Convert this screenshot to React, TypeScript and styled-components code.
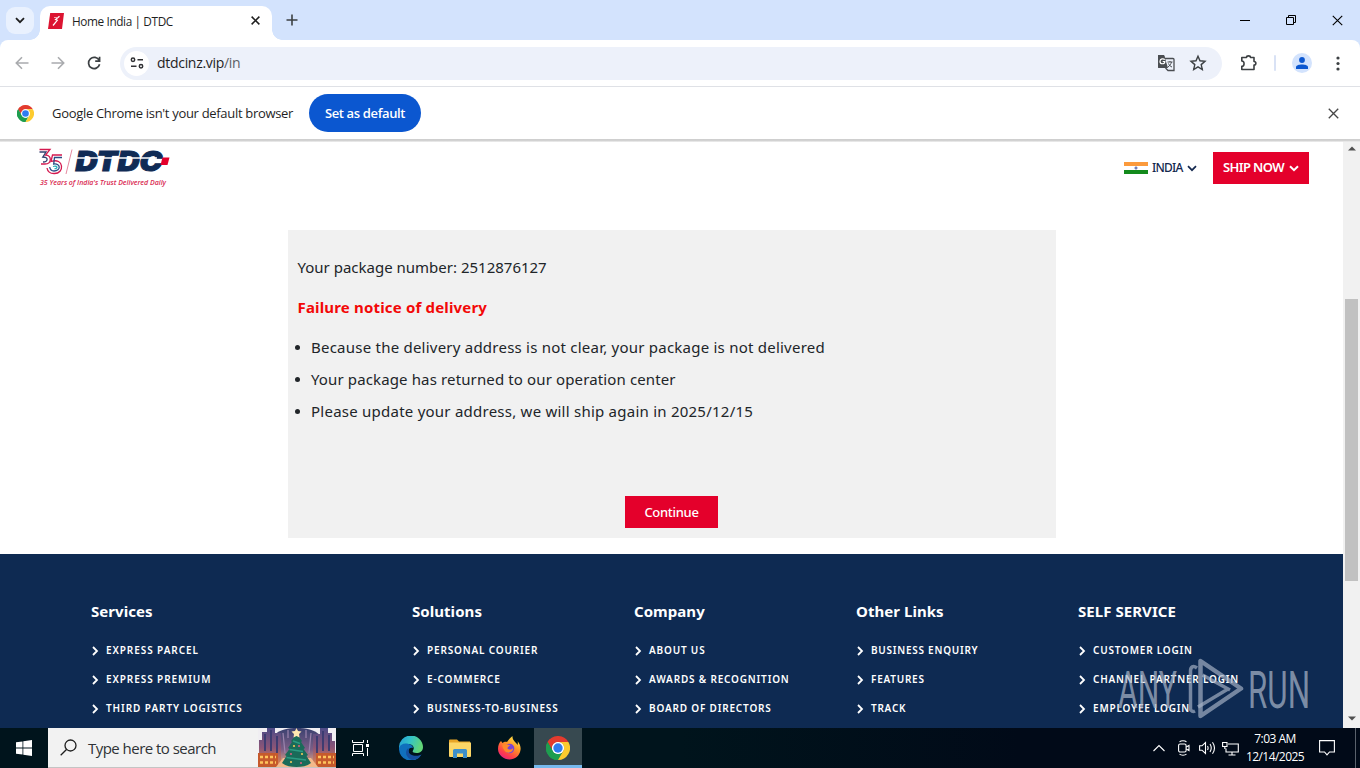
import styled, { createGlobalStyle } from "styled-components";

const UI_FONT = `"Open Sans", "Noto Sans", sans-serif`;
const SITE_FONT = `"Noto Sans", "Open Sans", sans-serif`;

const GlobalStyle = createGlobalStyle`
  * {
    box-sizing: border-box;
  }

  body {
    margin: 0;
    overflow: hidden;
    background: #fff;
    font-family: ${UI_FONT};
  }

  svg {
    display: block;
    flex: none;
  }
`;

const Screen = styled.div`
  width: 1360px;
  height: 768px;
  display: flex;
  flex-direction: column;
  overflow: hidden;
`;

interface TextProps {
  $size: number;
  $spacing?: number;
  $weight?: number;
}

const Text = styled.span<TextProps>`
  font-size: ${(p) => p.$size}px;
  letter-spacing: ${(p) => p.$spacing ?? 0}px;
  font-weight: ${(p) => p.$weight ?? 400};
  white-space: nowrap;
`;

/* Browser tabs */

const TabStrip = styled.div`
  height: 40px;
  flex: none;
  display: flex;
  background: #d3e3fd;
`;

const TabSearch = styled.div`
  width: 28px;
  height: 27px;
  margin: 7px 6px 0;
  border-radius: 9px;
  background: #e9f1fe;
  display: grid;
  place-items: center;
`;

const Tab = styled.div`
  position: relative;
  width: 232px;
  height: 34px;
  margin-top: 6px;
  padding: 0 12px 5px 8px;
  border-radius: 10px 10px 0 0;
  background: #fff;
  color: #1f1f1f;
  display: flex;
  align-items: center;
  gap: 8px;

  &::before,
  &::after {
    content: "";
    position: absolute;
    bottom: 0;
    width: 10px;
    height: 10px;
  }

  &::before {
    left: -10px;
    background: radial-gradient(circle at 0 0, transparent 9.5px, #fff 10px);
  }

  &::after {
    right: -10px;
    background: radial-gradient(circle at 100% 0, transparent 9.5px, #fff 10px);
  }

  & > svg:last-child {
    margin-left: auto;
  }
`;

const NewTab = styled.div`
  width: 40px;
  padding-top: 14px;
  display: flex;
  justify-content: center;
`;

const WindowButtons = styled.div`
  margin-left: auto;
  display: flex;

  & > div {
    width: 46px;
    height: 40px;
    display: grid;
    place-items: center;
  }
`;

/* Toolbar */

const ToolbarBack = styled.div`
  flex: none;
  background: #d3e3fd;
`;

const Toolbar = styled.div`
  height: 47px;
  padding: 0 13px 0 13px;
  border-radius: 8px 8px 0 0;
  border-bottom: 1px solid #dfe1e6;
  background: #fff;
  display: flex;
  align-items: center;
`;

const NavButtons = styled.div`
  width: 107px;
  display: flex;
  gap: 18px;
`;

const Omnibox = styled.div`
  width: 1102px;
  height: 33px;
  padding: 0 15px 0 4px;
  border-radius: 17px;
  background: #edf1fa;
  color: #1f1f1f;
  display: flex;
  align-items: center;

  & > span {
    padding-bottom: 1px;
  }

  & em {
    font-style: normal;
    color: #5c5f66;
  }
`;

const SiteInfo = styled.div`
  width: 25px;
  height: 25px;
  margin-right: 8px;
  border-radius: 50%;
  background: #fff;
  display: grid;
  place-items: center;
`;

const OmniboxActions = styled.div`
  margin-left: auto;
  display: flex;
  align-items: center;
  gap: 14px;
`;

const ToolbarActions = styled.div`
  margin-left: 18px;
  display: flex;
  align-items: center;
`;

const Divider = styled.div`
  width: 2px;
  height: 16px;
  margin: 0 16px 0 16px;
  border-radius: 1px;
  background: #d9e2f5;
`;

const Avatar = styled.div`
  width: 20px;
  height: 20px;
  margin-right: 24px;
  border-radius: 50%;
  background: #d3e3fd;
  display: grid;
  place-items: center;
`;

/* Default browser prompt */

const InfoBar = styled.div`
  height: 52px;
  flex: none;
  padding: 0 21px 0 17px;
  background: #fff;
  color: #1f1f1f;
  display: flex;
  align-items: center;

  & > svg:last-child {
    margin-left: auto;
  }
`;

const InfoText = styled.div`
  width: 257px;
  margin-left: 18px;
  padding-bottom: 2px;
`;

const DefaultButton = styled.div`
  width: 112px;
  height: 38px;
  border-radius: 19px;
  background: #0b57d0;
  color: #fff;
  display: grid;
  place-items: center;
`;

const InfoShadow = styled.div`
  height: 3px;
  flex: none;
  background: linear-gradient(#cdcdcd, #d2d2d2 50%, #f1f1f1);
`;

/* Web page */

const Viewport = styled.div`
  height: 586px;
  flex: none;
  display: flex;
`;

const Page = styled.div`
  position: relative;
  width: 1343px;
  display: flex;
  flex-direction: column;
  background: #fff;
  font-family: ${SITE_FONT};
`;

const Header = styled.div`
  height: 88px;
  padding: 2px 34px 0 36px;
  display: flex;
  justify-content: space-between;
`;

const HeaderActions = styled.div`
  height: 32px;
  margin-top: 8px;
  display: flex;
  align-items: center;
  color: #14284f;

  & span {
    padding-bottom: 2px;
  }
`;

const Country = styled.div`
  width: 89px;
  display: flex;
  align-items: center;
  gap: 4px;
`;

const ShipButton = styled.div`
  width: 96px;
  height: 32px;
  background: #e4002b;
  color: #fff;
  display: flex;
  align-items: center;
  justify-content: center;
  gap: 5px;
`;

const Notice = styled.div`
  width: 768px;
  height: 308px;
  margin: 0 0 16px 288px;
  padding: 21px 9px 10px;
  background: #f1f1f1;
  color: #212529;
  display: flex;
  flex-direction: column;
`;

const NoticeLine = styled.div<{ $alert?: boolean }>`
  height: 32px;
  margin-bottom: 8px;
  padding-left: 0.5px;
  line-height: 32px;
  color: ${(p) => (p.$alert ? "#f30808" : "inherit")};
`;

const NoticeList = styled.ul`
  margin: 0;
  padding: 0 0 0 14px;
  list-style: none;

  & > li {
    position: relative;
    height: 32px;
    line-height: 32px;
  }

  & > li::before {
    content: "";
    position: absolute;
    left: -16px;
    top: 14px;
    width: 5px;
    height: 5px;
    border-radius: 50%;
    background: #212529;
  }
`;

const ContinueButton = styled.div`
  width: 93px;
  height: 32px;
  margin: auto 0 0 328px;
  background: #e4002b;
  color: #fff;
  display: grid;
  place-items: center;
`;

const Footer = styled.div`
  flex: 1;
  padding: 41px 0 0 91px;
  background: #0e2a52;
  color: #fff;
  display: grid;
  grid-template-columns: 321px 222px 222px 222px 1fr;
`;

const FooterTitle = styled.div`
  height: 32px;
  margin-bottom: 8px;
  line-height: 32px;
`;

const FooterLink = styled.div`
  height: 29px;
  display: flex;
  align-items: center;
  gap: 7px;

  & > svg {
    margin-top: 2px;
  }
`;

const Watermark = styled.svg`
  position: absolute;
  right: 27px;
  bottom: 8px;
`;

const Scrollbar = styled.div`
  width: 17px;
  background: #f1f1f1;
  display: flex;
  flex-direction: column;
  align-items: center;
  justify-content: space-between;
  padding: 4px 0 7px;
`;

const ScrollTrack = styled.div`
  width: 13px;
  flex: 1;
  padding-top: 148px;
`;

const ScrollThumb = styled.div`
  height: 282px;
  background: #c1c1c1;
`;

/* Windows taskbar */

const Taskbar = styled.div`
  height: 40px;
  flex: none;
  background: linear-gradient(90deg, #00141c, #00141c 50%, #010a18 75%, #010a18);
  color: #fff;
  display: flex;
`;

const StartButton = styled.div`
  width: 48px;
  display: grid;
  place-items: center;
`;

const SearchBox = styled.div`
  width: 288px;
  background: #f2f2f2;
  border-bottom: 1px solid #c4c4c4;
  color: #2f3336;
  display: flex;
  align-items: center;

  & > svg:first-child {
    margin: 0 11px 0 12px;
  }

  & > svg:last-child {
    margin-left: auto;
  }
`;

const TaskButton = styled.div<{ $width?: number; $active?: boolean }>`
  width: ${(p) => p.$width ?? 49}px;
  border-bottom: 3px solid ${(p) => (p.$active ? "#76b9ed" : "transparent")};
  border-top: 3px solid ${(p) => (p.$active ? "#374950" : "transparent")};
  background: ${(p) => (p.$active ? "#374950" : "transparent")};
  display: grid;
  place-items: center;
`;

const Tray = styled.div`
  margin-left: auto;
  display: flex;
  align-items: center;
`;

const TrayIcon = styled.svg<{ $gap?: number }>`
  margin-left: ${(p) => p.$gap ?? 0}px;
  fill: none;
  stroke: #fff;
  stroke-width: 1.1;
`;

const Clock = styled.div`
  width: 72px;
  padding: 2px 0;
  display: flex;
  flex-direction: column;
  align-items: center;
  line-height: 18px;
`;

const ShowDesktop = styled.div`
  width: 5px;
  height: 40px;
  margin-left: 20px;
  border-left: 1px solid #5a626c;
`;

const ChevronDown = ({ width, color, stroke }: { width: number; color: string; stroke: number }) => (
  <svg width={width} height={7} viewBox="0 0 10 7" fill="none" stroke={color} strokeWidth={stroke}>
    <path d="M1 1.2 5 5.2 9 1.2" />
  </svg>
);

const ChromeLogo = ({ size }: { size: number }) => (
  <svg width={size} height={size} viewBox="0 0 48 48">
    <circle cx="24" cy="24" r="12" fill="#fff" />
    <path d="M3.2 12A24 24 0 0 1 44.8 12H24A12 12 0 0 0 13.6 18z" fill="#e33b2e" />
    <path d="M3.2 12 13.6 30A12 12 0 0 0 34.4 30L24 48A24 24 0 0 1 3.2 12z" fill="#1e9d4f" />
    <path d="M3.2 12A24 24 0 0 1 8 6L18 14A12 12 0 0 0 12.300 27.800z" fill="#e33b2e" />
    <path d="M3.200 12 12.600 28A12 12 0 0 0 24 36L26 44 24 48A24 24 0 0 1 3.200 12z" fill="#1e9d4f" />
    <path d="M44.8 12A24 24 0 0 1 24 48L34.4 30A12 12 0 0 0 24 12z" fill="#fdcb2e" />
    <circle cx="24" cy="24" r="12" fill="#fff" />
    <circle cx="24" cy="24" r="9.4" fill="#2f7cf0" />
  </svg>
);

const Favicon = () => (
  <svg width="16" height="16" viewBox="0 0 16 16">
    <path d="M2.2 0H16L14 16H0z" fill="#dc1431" />
    <path d="M11.500 3.200 7.500 6.500 9.300 7.300 5 12.500" fill="none" stroke="#fff" strokeWidth="1.200" />
    <path d="M6 4.500H9.500" stroke="#f5a0ac" strokeWidth="1" />
  </svg>
);

const Cross = ({ size, stroke, color }: { size: number; stroke: number; color: string }) => (
  <svg width={size} height={size} viewBox="0 0 10 10" stroke={color} strokeWidth={stroke}>
    <path d="M.7.7 9.3 9.3M9.3.7.7 9.3" />
  </svg>
);

const Logo = () => (
  <svg width="136" height="46" viewBox="36 144 136 46">
    <g fill="none" strokeWidth="1.300">
      <path d="M39.500 149.500H50L45.500 155C52 155 52 164 45 164H41" stroke="#d4194f" />
      <path d="M39.500 152H46L42.800 157C49 157 48 162 43 162" stroke="#31406f" />
      <path d="M62 155H52.500L51 161.500C64 157 65 174 54 173.500C49.500 173.500 47.500 171 47 168" stroke="#d4194f" />
      <path d="M62 157.500H54.500L53.700 164C61 163 61 171 54 171C51.500 171 50 169 49.700 167" stroke="#2a4b85" />
      <path d="M53 166.500C58 165 58 169 54.500 168.700" stroke="#2eb0bd" />
    </g>
    <path d="M72 149.500 66 174" stroke="#e58aa0" strokeWidth="1" />
    <text
      x="75.500"
      y="171"
      textLength="87"
      lengthAdjust="spacingAndGlyphs"
      fontFamily="Inter, sans-serif"
      fontSize="26.500"
      fontWeight="900"
      fontStyle="italic"
      fill="#102b55"
      stroke="#102b55"
      strokeWidth="1"
    >
      DTDC
    </text>
    <path d="M75 158H157" stroke="#fff" strokeWidth="1.500" />
    <path d="M162.500 157.500H169.500L167.500 165H160.500z" fill="#e4002b" />
    <text
      x="40"
      y="184.500"
      textLength="126"
      lengthAdjust="spacingAndGlyphs"
      fontFamily="Open Sans, sans-serif"
      fontSize="6.600"
      fontWeight="600"
      fontStyle="italic"
      fill="#d92850"
    >
      35 Years of India's Trust Delivered Daily
    </text>
  </svg>
);

const IndiaFlag = () => (
  <svg width="24" height="12" viewBox="0 0 24 12">
    <rect width="24" height="12" fill="#fff" />
    <rect width="24" height="4" fill="#fb9a3c" />
    <rect y="8" width="24" height="4" fill="#138a1c" />
    <circle cx="12" cy="6" r="1.200" fill="#8d98c8" stroke="#4a5aa5" strokeWidth=".6" />
  </svg>
);

const AnyRun = () => (
  <Watermark width="200" height="62" viewBox="0 0 200 62">
    <g fill="#a7b3c6" fillOpacity=".72" fontFamily="Roboto, sans-serif" fontWeight="400" fontSize="52">
      <text x="2" y="50" textLength="59" lengthAdjust="spacingAndGlyphs">
        ANY
      </text>
      <text x="132" y="50" textLength="62" lengthAdjust="spacingAndGlyphs">
        RUN
      </text>
    </g>
    <g fill="none" stroke="#a7b3c6" strokeOpacity=".68" strokeWidth="4.500" strokeLinejoin="round">
      <path d="M84.500 3V58L125 30.500z" />
      <path d="M86.500 17 114 32M82 49 112 31" strokeWidth="3.500" />
      <path d="M81 10C77 7 74.500 9 74.500 13V51C74.500 53 77 54 79 53" strokeWidth="3.500" />
    </g>
  </Watermark>
);

const HolidayArt = () => (
  <svg width="78" height="39" viewBox="0 0 78 39">
    <defs>
      <linearGradient id="dusk" x1="0" y1="0" x2="0" y2="1">
        <stop offset="0" stopColor="#4d4b87" />
        <stop offset=".5" stopColor="#8b5577" />
        <stop offset="1" stopColor="#e58a4e" />
      </linearGradient>
      <linearGradient id="street" x1="0" y1="0" x2="0" y2="1">
        <stop offset="0" stopColor="#39406f" />
        <stop offset=".55" stopColor="#7c5f87" />
        <stop offset="1" stopColor="#f0b07c" />
      </linearGradient>
    </defs>
    <rect width="78" height="39" fill="#f0eef2" />
    <path d="M15 8C22 1 30 0 39 0S56 1 63 8V39H15z" fill="url(#street)" />
    <path d="M1 25V12H4V4H9V0H17V5H23V39H1z" fill="url(#dusk)" />
    <path d="M77 25V13H74V5H70V0H62V6H55V39H77z" fill="url(#dusk)" />
    <path d="M7 6V23M13 2V23M19 8V28M59 8V28M65 3V23M71 7V23" stroke="#383a70" strokeWidth="1.800" />
    <path d="M25 5 27 25M53 5 51 25M30 2V10M48 2V10" stroke="#9b84ad" strokeWidth="1.200" />
    <rect y="25" width="20" height="14" fill="#c65a2c" />
    <rect x="58" y="25" width="20" height="14" fill="#c65a2c" />
    <path d="M2 29H18M2 34.500H18M60 29H76M60 34.500H76" stroke="#ffc45c" strokeWidth="2.500" strokeDasharray="3 2" />
    <path d="M18 39 25 30H53L60 39z" fill="#f3b98a" />
    <path
      d="M38.500 6 44 13 43 14 47 20 45.500 21 50 27 48.500 28 53 35C49 38 44 39 38.500 39S28 38 24 35L28.500 28 27 27 31.500 21 30 20 34 14 33 13z"
      fill="#1a6b59"
    />
    <path d="M35 13 42 15.500M31.500 21.500 45 23.500M28.500 29.500 48 32" stroke="#2d9b83" strokeWidth="1.600" />
    <path d="M38.500 0 40 3 43.500 3.500 41 6 41.500 9.500 38.500 8 35.500 9.500 36 6 33.500 3.500 37 3z" fill="#ffe7b0" />
    <g fill="#f1c958">
      <circle cx="36" cy="18" r="1.100" />
      <circle cx="44" cy="26" r="1.100" />
      <circle cx="33" cy="34" r="1.100" />
    </g>
    <g fill="#d65d7b">
      <circle cx="41" cy="18" r="1.100" />
      <circle cx="33" cy="26" r="1.100" />
      <circle cx="43" cy="35" r="1.100" />
    </g>
  </svg>
);

const Edge = () => (
  <svg width="24" height="24" viewBox="0 0 24 24">
    <defs>
      <linearGradient id="edge-top" x1="0" y1="0" x2="1" y2=".3">
        <stop offset="0" stopColor="#229bd8" />
        <stop offset=".5" stopColor="#33c3c8" />
        <stop offset="1" stopColor="#62d678" />
      </linearGradient>
    </defs>
    <path d="M0 12A12 12 0 0 1 24 11C24 15 21 17 17.500 17C14 17 13 15.500 14 14.500C16 12 14 8 9 8C4 8 1 10 0 14z" fill="url(#edge-top)" />
    <path d="M0 12C1 8.500 4.500 7 8 7.500C12 8 14 10 14 12C12 11 9.500 12 9.500 15C9.500 19 14 21.500 18 21C20 20.700 22 19 22.500 18.500A12 12 0 0 1 0 12z" fill="#1070bd" />
    <path d="M9.500 12C5 15 7 22 13 24A12 12 0 0 0 22.500 18.500C17 21.500 9.500 19 9.500 15z" fill="#164f9e" />
  </svg>
);

const Explorer = () => (
  <svg width="22" height="19" viewBox="0 0 22 19">
    <path d="M0 1.500Q0 .5 1 .5H8L10 2.500H21V7H0z" fill="#e8a527" />
    <path d="M0 3.500H22V17Q22 18 21 18H1Q0 18 0 17z" fill="#fcd667" />
    <path d="M4 19V11.500Q4 10 5.500 10H16.500Q18 10 18 11.500V19H14V14.500H8V19z" fill="#3e8fcb" />
  </svg>
);

const Firefox = () => (
  <svg width="23" height="24" viewBox="0 0 23 24">
    <defs>
      <linearGradient id="fox" x1=".8" y1="0" x2=".2" y2="1">
        <stop offset="0" stopColor="#fff04c" />
        <stop offset=".4" stopColor="#ff9526" />
        <stop offset=".75" stopColor="#ff3e49" />
        <stop offset="1" stopColor="#e31d88" />
      </linearGradient>
    </defs>
    <path d="M3 5 4.500 7C6 5.500 8 5.500 9 6C10 4 12 2 14.500 0C14 4 18 6 19.500 9C20 7.500 20 6 19.500 5C22 8 23 11 22.500 14C21.500 20 17 23.500 11.500 23.500S0 19 0 13C0 9 1.500 6.500 3 5z" fill="url(#fox)" />
    <circle cx="11.500" cy="12.500" r="4.800" fill="#7a43d6" />
    <path d="M4.500 8.500C8 7.500 10 9 12.500 9C11 10.500 9.500 10.500 9.500 12.500C11 14.500 14 13.500 15 12C15.500 16.500 9 18.500 6.500 14.500C5 12.500 4 10.500 4.500 8.500z" fill="#ff8a2b" />
  </svg>
);

const Puzzle = () => (
  <svg width="18" height="18" viewBox="0 0 18 18" fill="none" stroke="#3c4043" strokeWidth="1.600" strokeLinejoin="round">
    <path d="M1.800 3.500H6.500C6.500 1.300 10.500 1.300 10.500 3.500H14V7.500C16.500 7.500 16.500 11 14 11V15.500H1.800V12.300C4.800 12.300 4.800 7 1.800 7z" />
  </svg>
);

const Translate = () => (
  <svg width="18" height="18" viewBox="0 0 18 18">
    <path d="M1.500 1H7L11.500 14H2Q1 14 1 13V2Q1 1 1.500 1z" fill="#4a4d51" />
    <path d="M8 4.500H16Q17 4.500 17 5.500V16.500H11L8.500 14" fill="#edf1fa" stroke="#4a4d51" strokeWidth="1.300" />
    <path d="M1.500 1H7L11 14H2Q1 14 1 13V2Q1 1 1.500 1z" fill="#4a4d51" />
    <path d="M7.800 5.700C6.500 4.200 3 4.500 3 7.500S7.800 10.500 7.800 7.500H5.700" fill="none" stroke="#fff" strokeWidth="1.200" />
    <path d="M10.500 8H15.500M13 7V8M14.500 8C14 10 12.500 12 11 13M11.500 9.500C12 11 13.500 12.500 15 13" fill="none" stroke="#4a4d51" strokeWidth="1" />
  </svg>
);

const footerColumns = [
  { title: "Services", spacing: 0.92, links: ["EXPRESS PARCEL", "EXPRESS PREMIUM", "THIRD PARTY LOGISTICS"] },
  { title: "Solutions", spacing: 0.83, links: ["PERSONAL COURIER", "E-COMMERCE", "BUSINESS-TO-BUSINESS"] },
  { title: "Company", spacing: 0.82, links: ["ABOUT US", "AWARDS & RECOGNITION", "BOARD OF DIRECTORS"] },
  { title: "Other Links", spacing: 0.75, links: ["BUSINESS ENQUIRY", "FEATURES", "TRACK"] },
  { title: "SELF SERVICE", spacing: 0.8, links: ["CUSTOMER LOGIN", "CHANNEL PARTNER LOGIN", "EMPLOYEE LOGIN"] },
];

const BrowserChrome = () => (
  <>
    <TabStrip>
      <TabSearch>
        <ChevronDown width={10} color="#1f1f1f" stroke={1.8} />
      </TabSearch>
      <Tab>
        <Favicon />
        <Text $size={11.8} $spacing={-0.38}>
          Home India | DTDC
        </Text>
        <Cross size={9} stroke={1.7} color="#1f1f1f" />
      </Tab>
      <NewTab>
        <svg width="12" height="12" viewBox="0 0 12 12" stroke="#3c4043" strokeWidth="1.600">
          <path d="M6 .5V11.500M.5 6H11.500" />
        </svg>
      </NewTab>
      <WindowButtons>
        <div>
          <svg width="10" height="2" viewBox="0 0 10 2">
            <rect y="1" width="10" height="1" fill="#000" />
          </svg>
        </div>
        <div>
          <svg width="10" height="10" viewBox="0 0 10 10" fill="none" stroke="#000">
            <path d="M.5 2.500H7.500V9.500H.5zM2.500 2.500V.5H9.500V7.500H7.500" />
          </svg>
        </div>
        <div>
          <Cross size={11} stroke={1} color="#000" />
        </div>
      </WindowButtons>
    </TabStrip>
    <ToolbarBack>
      <Toolbar>
        <NavButtons>
          <svg width="18" height="18" viewBox="0 0 18 18" fill="none" stroke="#a9abae" strokeWidth="1.600">
            <path d="M15.500 9H3.500M9 3.300 3.300 9 9 14.700" />
          </svg>
          <svg width="18" height="18" viewBox="0 0 18 18" fill="none" stroke="#a9abae" strokeWidth="1.600">
            <path d="M2.500 9H14.500M9 3.300 14.700 9 9 14.700" />
          </svg>
          <svg width="18" height="18" viewBox="0 0 18 18" fill="none" stroke="#3c4043" strokeWidth="1.700">
            <path d="M14.200 6.500A5.600 5.600 0 1 0 14.600 10.300M14.600 2.800V7.200H10.200" />
          </svg>
        </NavButtons>
        <Omnibox>
          <SiteInfo>
            <svg width="14" height="12" viewBox="0 0 14 12" fill="none" stroke="#303134" strokeWidth="1.500">
              <circle cx="3" cy="2.800" r="1.700" />
              <path d="M7.500 2.800H13M1 9.200H6.500" />
              <circle cx="11" cy="9.200" r="1.700" />
            </svg>
          </SiteInfo>
          <Text $size={14} $spacing={-0.3}>
            dtdcinz.vip<em>/in</em>
          </Text>
          <OmniboxActions>
            <Translate />
            <svg width="18" height="18" viewBox="0 0 18 18" fill="none" stroke="#3c4043" strokeWidth="1.400">
              <path d="M9 2.200 11 6.800 16 7.300 12.200 10.600 13.300 15.500 9 12.900 4.700 15.500 5.800 10.600 2 7.300 7 6.800z" />
            </svg>
          </OmniboxActions>
        </Omnibox>
        <ToolbarActions>
          <Puzzle />
          <Divider />
          <Avatar>
            <svg width="12" height="12" viewBox="0 0 12 12" fill="#0b57d0">
              <circle cx="6" cy="3" r="2.900" />
              <path d="M0 12V10C0 6.500 12 6.500 12 10V12z" />
            </svg>
          </Avatar>
          <svg width="4" height="15" viewBox="0 0 4 15" fill="#3c4043">
            <circle cx="2" cy="2" r="1.600" />
            <circle cx="2" cy="7.500" r="1.600" />
            <circle cx="2" cy="13" r="1.600" />
          </svg>
        </ToolbarActions>
      </Toolbar>
    </ToolbarBack>
    <InfoBar>
      <ChromeLogo size={17} />
      <InfoText>
        <Text $size={13} $spacing={-0.31}>
          Google Chrome isn't your default browser
        </Text>
      </InfoText>
      <DefaultButton>
        <Text $size={13} $weight={600} $spacing={-0.36}>
          Set as default
        </Text>
      </DefaultButton>
      <Cross size={11} stroke={1.2} color="#474747" />
    </InfoBar>
    <InfoShadow />
  </>
);

const WebPage = () => (
  <Viewport>
    <Page>
      <Header>
        <Logo />
        <HeaderActions>
          <Country>
            <IndiaFlag />
            <Text $size={12} $weight={500} $spacing={-0.75}>
              INDIA
            </Text>
            <ChevronDown width={10} color="#14284f" stroke={1.7} />
          </Country>
          <ShipButton>
            <Text $size={13} $weight={600} $spacing={-0.6}>
              SHIP NOW
            </Text>
            <ChevronDown width={10} color="#fff" stroke={2} />
          </ShipButton>
        </HeaderActions>
      </Header>
      <Notice>
        <NoticeLine>
          <Text $size={15}>Your package number: 2512876127</Text>
        </NoticeLine>
        <NoticeLine $alert>
          <Text $size={15} $weight={700} $spacing={0.17}>
            Failure notice of delivery
          </Text>
        </NoticeLine>
        <NoticeList>
          <li>
            <Text $size={15} $spacing={0.23}>
              Because the delivery address is not clear, your package is not delivered
            </Text>
          </li>
          <li>
            <Text $size={15} $spacing={0.13}>
              Your package has returned to our operation center
            </Text>
          </li>
          <li>
            <Text $size={15} $spacing={0.24}>
              Please update your address, we will ship again in 2025/12/15
            </Text>
          </li>
        </NoticeList>
        <ContinueButton>
          <Text $size={13} $weight={500} $spacing={-0.3}>
            Continue
          </Text>
        </ContinueButton>
      </Notice>
      <Footer>
        {footerColumns.map((column) => (
          <div key={column.title}>
            <FooterTitle>
              <Text $size={15} $weight={700} $spacing={0.05}>
                {column.title}
              </Text>
            </FooterTitle>
            {column.links.map((link) => (
              <FooterLink key={link}>
                <svg width="8" height="10" viewBox="0 0 8 10" fill="none" stroke="#fff" strokeWidth="1.800">
                  <path d="M2 1 6 5 2 9" />
                </svg>
                <Text $size={10} $weight={600} $spacing={column.spacing}>
                  {link}
                </Text>
              </FooterLink>
            ))}
          </div>
        ))}
      </Footer>
      <AnyRun />
    </Page>
    <Scrollbar>
      <svg width="8" height="5" viewBox="0 0 8 5" fill="#505050">
        <path d="M0 4.500 4 .5 8 4.500z" />
      </svg>
      <ScrollTrack>
        <ScrollThumb />
      </ScrollTrack>
      <svg width="8" height="5" viewBox="0 0 8 5" fill="#505050">
        <path d="M0 .5 4 4.500 8 .5z" />
      </svg>
    </Scrollbar>
  </Viewport>
);

const WindowsTaskbar = () => (
  <Taskbar>
    <StartButton>
      <svg width="16" height="16" viewBox="0 0 16 16" fill="#fff">
        <path d="M0 2.300 6.500 1.400V7.600H0zM7.300 1.300 16 0V7.600H7.300zM0 8.400H6.500V14.600L0 13.700zM7.300 8.400H16V16L7.300 14.700z" />
      </svg>
    </StartButton>
    <SearchBox>
      <svg width="17" height="17" viewBox="0 0 17 17" fill="none" stroke="#1f1f1f" strokeWidth="1.300">
        <circle cx="10.500" cy="6.500" r="5.500" />
        <path d="M6.500 10.500.7 16.300" />
      </svg>
      <Text $size={15} $spacing={-0.53}>
        Type here to search
      </Text>
      <HolidayArt />
    </SearchBox>
    <TaskButton $width={50}>
      <svg width="18" height="16" viewBox="0 0 18 16" fill="none" stroke="#fff">
        <path d="M.5 0V2.500H11.500V0M.5 16V13.500H11.500V16M1.500 4.500H10.500V11.500H1.500zM15.500 0V3M15.500 8V16" />
        <rect x="14.500" y="4.500" width="2" height="2" fill="#fff" />
      </svg>
    </TaskButton>
    <TaskButton>
      <Edge />
    </TaskButton>
    <TaskButton>
      <Explorer />
    </TaskButton>
    <TaskButton $width={50}>
      <Firefox />
    </TaskButton>
    <TaskButton $width={48} $active>
      <ChromeLogo size={24} />
    </TaskButton>
    <Tray>
      <TrayIcon width="12" height="8" viewBox="0 0 12 8">
        <path d="M.5 7 6 1.500 11.500 7" />
      </TrayIcon>
      <TrayIcon $gap={13} width="12" height="16" viewBox="0 0 12 16">
        <rect x=".6" y="4" width="7.500" height="8" rx="1.500" />
        <path d="M8.200 7 11 5.500V10.500L8.200 9M1.500 2C3 .3 7 .3 8.500 2M1.500 14C3 15.700 7 15.700 8.500 14" />
      </TrayIcon>
      <TrayIcon $gap={9} width="17" height="14" viewBox="0 0 17 14">
        <path d="M.6 4.800H3L6.500 1.500V12.500L3 9.200H.6zM8.500 5Q9.700 7 8.500 9M11 3Q13.500 7 11 11M13.500 1.200Q17.500 7 13.500 12.800" />
      </TrayIcon>
      <TrayIcon $gap={6} width="17" height="15" viewBox="0 0 17 15">
        <path d="M6 3H16.300V11H4V7.500M10 11V14M6.500 14H13.500M.6 1.500H5V5.500H.6zM2.800 5.500V8" />
      </TrayIcon>
      <Clock>
        <Text $size={12} $spacing={-0.55}>
          7:03 AM
        </Text>
        <Text $size={12} $spacing={-0.55}>
          12/14/2025
        </Text>
      </Clock>
      <TrayIcon $gap={8} width="16" height="16" viewBox="0 0 16 16">
        <path d="M.6.6H15.400V12H10.500L8 14.800 5.500 12H.6z" />
      </TrayIcon>
      <ShowDesktop />
    </Tray>
  </Taskbar>
);

const App = () => (
  <Screen>
    <GlobalStyle />
    <BrowserChrome />
    <WebPage />
    <WindowsTaskbar />
  </Screen>
);

export default App;
